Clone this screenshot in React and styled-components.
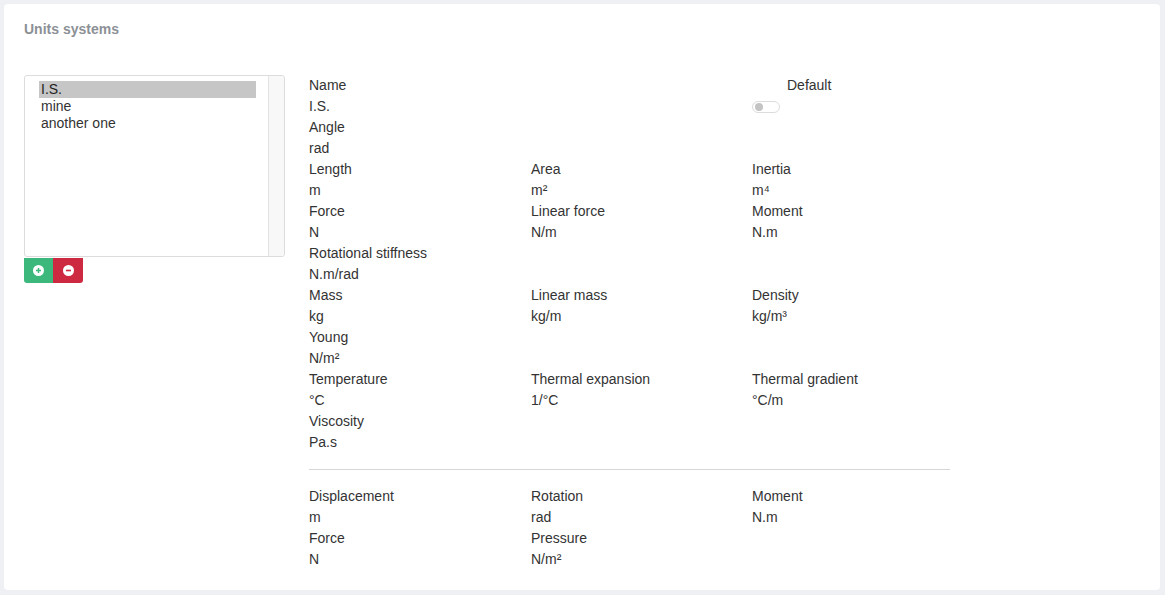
import React from "react";
import styled, { createGlobalStyle } from "styled-components";

const Global = createGlobalStyle`
  html, body { margin: 0; padding: 0; background: #eef0f4; }
  body { font-family: "Liberation Sans", Arial, sans-serif; color: #333; }
`;

const Page = styled.div`
  padding: 4px 5px 5px 4px;
  height: 595px;
  box-sizing: border-box;
`;

const Card = styled.section`
  background: #fff;
  border-radius: 4px;
  height: 100%;
  box-sizing: border-box;
  padding: 17px 20px;
`;

const Title = styled.h2`
  margin: 0;
  font-size: 14px;
  line-height: 17px;
  font-weight: bold;
  color: #8c9096;
`;

const Body = styled.div`
  display: flex;
  gap: 24px;
  margin-top: 37px;
`;

const Left = styled.div`
  width: 261px;
  display: flex;
  flex-direction: column;
`;

const ListBox = styled.div`
  height: 182px;
  border: 1px solid #dcdcdc;
  border-radius: 3px;
  box-sizing: border-box;
  display: flex;
  overflow: hidden;
`;

const ListItems = styled.ul`
  flex: 1;
  list-style: none;
  margin: 0;
  padding: 5px 12px 0 14px;
`;

const ListItem = styled.li`
  font-size: 14px;
  line-height: 17px;
  padding-left: 2px;
  color: ${(p) => (p.$selected ? "#222" : "#333")};
  background: ${(p) => (p.$selected ? "#c6c6c6" : "transparent")};
`;

const Track = styled.div`
  width: 15px;
  border-left: 1px solid #e2e2e2;
  background: #f8f8f8;
`;

const Buttons = styled.div`
  display: flex;
  margin-top: 1px;
`;

const IconButton = styled.button`
  width: ${(p) => p.$w}px;
  height: 25px;
  border: none;
  padding: 0;
  display: flex;
  align-items: center;
  justify-content: center;
  background: ${(p) => p.$bg};
  border-radius: ${(p) => p.$radius};
  cursor: pointer;
`;

const Right = styled.div`
  width: 641px;
`;

const Grid = styled.div`
  display: grid;
  grid-template-columns: 222px 221px 1fr;
`;

const Cell = styled.div`
  font-size: 14px;
  line-height: 21px;
  height: 21px;
  color: #333;
  padding-left: ${(p) => p.$indent || 0}px;
  display: flex;
  align-items: center;
`;

const Toggle = styled.span`
  width: 28px;
  height: 12px;
  border: 1px solid #dcdcdc;
  border-radius: 7px;
  box-sizing: border-box;
  position: relative;
  margin-top: 1px;
  &::after {
    content: "";
    position: absolute;
    left: 2px;
    top: 1px;
    width: 8px;
    height: 8px;
    border-radius: 50%;
    background: #c4c4c4;
  }
`;

const Divider = styled.hr`
  border: none;
  border-top: 1px solid #d6d6d6;
  margin: 16px 0 16px;
`;

const PlusIcon = ({ color }) => (
  <svg width="11" height="11" viewBox="0 0 11 11">
    <circle cx="5.5" cy="5.5" r="5.5" fill="#fff" />
    <path d="M5.5 3v5M3 5.5h5" stroke={color} strokeWidth="1.5" />
  </svg>
);

const MinusIcon = ({ color }) => (
  <svg width="11" height="11" viewBox="0 0 11 11">
    <circle cx="5.5" cy="5.5" r="5.5" fill="#fff" />
    <path d="M3 5.5h5" stroke={color} strokeWidth="1.6" />
  </svg>
);

const rows = [
  ["Name", "", "Default"],
  ["I.S.", "", "toggle"],
  ["Angle", "", ""],
  ["rad", "", ""],
  ["Length", "Area", "Inertia"],
  ["m", "m²", "m⁴"],
  ["Force", "Linear force", "Moment"],
  ["N", "N/m", "N.m"],
  ["Rotational stiffness", "", ""],
  ["N.m/rad", "", ""],
  ["Mass", "Linear mass", "Density"],
  ["kg", "kg/m", "kg/m³"],
  ["Young", "", ""],
  ["N/m²", "", ""],
  ["Temperature", "Thermal expansion", "Thermal gradient"],
  ["°C", "1/°C", "°C/m"],
  ["Viscosity", "", ""],
  ["Pa.s", "", ""],
];

const rows2 = [
  ["Displacement", "Rotation", "Moment"],
  ["m", "rad", "N.m"],
  ["Force", "Pressure", ""],
  ["N", "N/m²", ""],
];

const renderCell = (v, key) => {
  if (v === "toggle")
    return (
      <Cell key={key}>
        <Toggle />
      </Cell>
    );
  if (v === "Default")
    return (
      <Cell key={key} $indent={35}>
        {v}
      </Cell>
    );
  return <Cell key={key}>{v}</Cell>;
};

export default function App() {
  return (
    <>
      <Global />
      <Page>
        <Card>
          <Title>Units systems</Title>
          <Body>
            <Left>
              <ListBox>
                <ListItems>
                  <ListItem $selected>I.S.</ListItem>
                  <ListItem>mine</ListItem>
                  <ListItem>another one</ListItem>
                </ListItems>
                <Track />
              </ListBox>
              <Buttons>
                <IconButton $w={29} $bg="#3cb87d" $radius="0 0 0 3px" aria-label="add">
                  <PlusIcon color="#3cb87d" />
                </IconButton>
                <IconButton $w={30} $bg="#cd2a42" $radius="0 0 3px 0" aria-label="remove">
                  <MinusIcon color="#cd2a42" />
                </IconButton>
              </Buttons>
            </Left>
            <Right>
              <Grid>
                {rows.map((r, i) => r.map((v, j) => renderCell(v, `${i}-${j}`)))}
              </Grid>
              <Divider />
              <Grid>
                {rows2.map((r, i) => r.map((v, j) => renderCell(v, `b${i}-${j}`)))}
              </Grid>
            </Right>
          </Body>
        </Card>
      </Page>
    </>
  );
}
